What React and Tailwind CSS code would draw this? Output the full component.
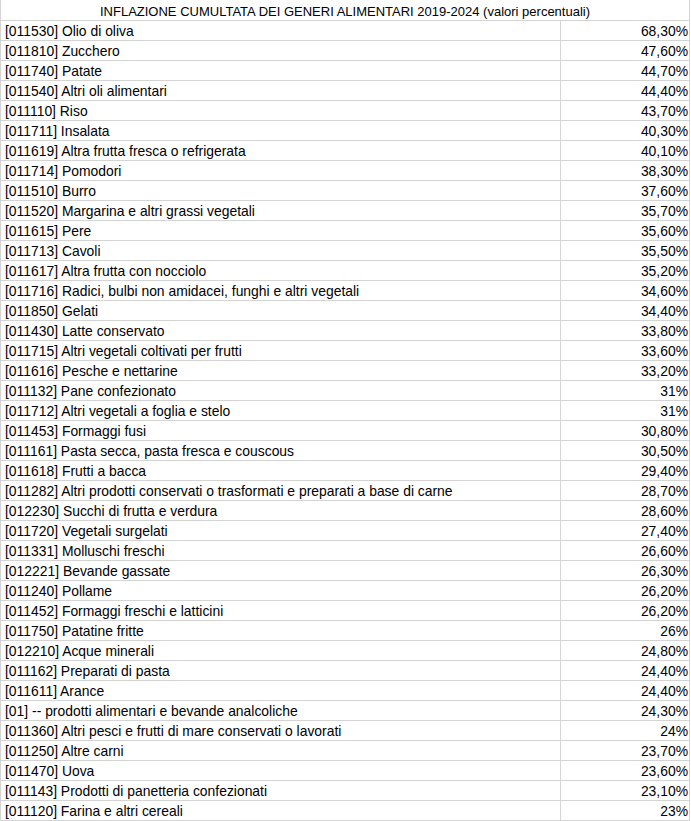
import React from "react";

const rows = [
  ["[011530] Olio di oliva", "68,30%"],
  ["[011810] Zucchero", "47,60%"],
  ["[011740] Patate", "44,70%"],
  ["[011540] Altri oli alimentari", "44,40%"],
  ["[011110] Riso", "43,70%"],
  ["[011711] Insalata", "40,30%"],
  ["[011619] Altra frutta fresca o refrigerata", "40,10%"],
  ["[011714] Pomodori", "38,30%"],
  ["[011510] Burro", "37,60%"],
  ["[011520] Margarina e altri grassi vegetali", "35,70%"],
  ["[011615] Pere", "35,60%"],
  ["[011713] Cavoli", "35,50%"],
  ["[011617] Altra frutta con nocciolo", "35,20%"],
  ["[011716] Radici, bulbi non amidacei, funghi e altri vegetali", "34,60%"],
  ["[011850] Gelati", "34,40%"],
  ["[011430] Latte conservato", "33,80%"],
  ["[011715] Altri vegetali coltivati per frutti", "33,60%"],
  ["[011616] Pesche e nettarine", "33,20%"],
  ["[011132] Pane confezionato", "31%"],
  ["[011712] Altri vegetali a foglia e stelo", "31%"],
  ["[011453] Formaggi fusi", "30,80%"],
  ["[011161] Pasta secca, pasta fresca e couscous", "30,50%"],
  ["[011618] Frutti a bacca", "29,40%"],
  ["[011282] Altri prodotti conservati o trasformati e preparati a base di carne", "28,70%"],
  ["[012230] Succhi di frutta e verdura", "28,60%"],
  ["[011720] Vegetali surgelati", "27,40%"],
  ["[011331] Molluschi freschi", "26,60%"],
  ["[012221] Bevande gassate", "26,30%"],
  ["[011240] Pollame", "26,20%"],
  ["[011452] Formaggi freschi e latticini", "26,20%"],
  ["[011750] Patatine fritte", "26%"],
  ["[012210] Acque minerali", "24,80%"],
  ["[011162] Preparati di pasta", "24,40%"],
  ["[011611] Arance", "24,40%"],
  ["[01] -- prodotti alimentari e bevande analcoliche", "24,30%"],
  ["[011360] Altri pesci e frutti di mare conservati o lavorati", "24%"],
  ["[011250] Altre carni", "23,70%"],
  ["[011470] Uova", "23,60%"],
  ["[011143] Prodotti di panetteria confezionati", "23,10%"],
  ["[011120] Farina e altri cereali", "23%"],
];

export default function App() {
  return (
    <div
      className="w-[691px] h-[821px] bg-white text-black text-[13.9px] leading-none"
      style={{ fontFamily: '"Liberation Sans", Arial, sans-serif' }}
    >
      <div className="w-[690px] border-l border-r border-[#d4d4d4]">
        <div className="h-[21px] border-b border-[#d4d4d4] flex items-center justify-center pt-[3px] text-[13px]">
          INFLAZIONE CUMULTATA DEI GENERI ALIMENTARI 2019-2024 (valori percentuali)
        </div>
        {rows.map(([label, val], i) => (
          <div key={i} className="h-[20px] border-b border-[#d4d4d4] flex">
            <div className="w-[560px] border-r border-[#d4d4d4] flex items-center pl-[4px] pt-[3px] whitespace-nowrap overflow-hidden">
              {label}
            </div>
            <div className="flex-1 flex items-center justify-end pr-[1px] pt-[3px]">
              {val}
            </div>
          </div>
        ))}
      </div>
    </div>
  );
}
